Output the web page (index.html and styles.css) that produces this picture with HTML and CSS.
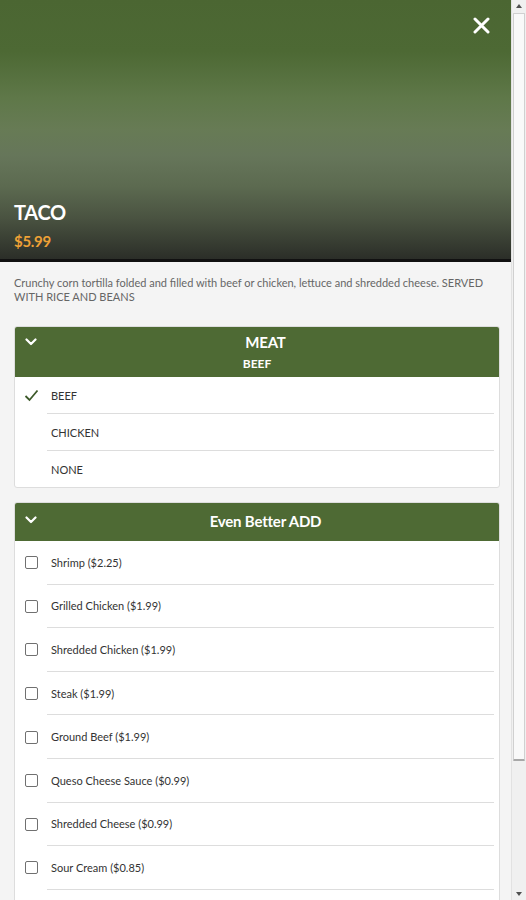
FILE: index.html
```html
<!DOCTYPE html>
<html>
<head>
<meta charset="utf-8">
<link rel="stylesheet" href="styles.css">
</head>
<body>
<div class="page">
  <header class="hero">
    <button class="close" aria-label="Close">
      <svg width="17" height="17" viewBox="0 0 17 17"><path d="M2 2L15 15M15 2L2 15" stroke="#fff" stroke-width="3" stroke-linecap="round"/></svg>
    </button>
    <div class="hero-text">
      <h1 class="title">TACO</h1>
      <div class="price">$5.99</div>
    </div>
  </header>
  <main class="content">
    <p class="desc">Crunchy corn tortilla folded and filled with beef or chicken, lettuce and shredded cheese. SERVED WITH RICE AND BEANS</p>

    <section class="card">
      <div class="card-head tall">
        <svg class="chev" width="12" height="8" viewBox="0 0 12 8"><path d="M1.5 1.5L6 6L10.5 1.5" stroke="#fff" stroke-width="2.2" fill="none" stroke-linecap="round" stroke-linejoin="round"/></svg>
        <div class="head-title">MEAT</div>
        <div class="head-sub">BEEF</div>
      </div>
      <ul class="opts radio">
        <li class="opt"><span class="mark"><svg width="15" height="13" viewBox="0 0 15 13"><path d="M1.5 7L5.5 11L13.5 1.5" stroke="#3d5a2a" stroke-width="1.8" fill="none"/></svg></span><span class="label">BEEF</span></li>
        <li class="opt"><span class="mark"></span><span class="label">CHICKEN</span></li>
        <li class="opt last"><span class="mark"></span><span class="label">NONE</span></li>
      </ul>
    </section>

    <section class="card">
      <div class="card-head">
        <svg class="chev" width="12" height="8" viewBox="0 0 12 8"><path d="M1.5 1.5L6 6L10.5 1.5" stroke="#fff" stroke-width="2.2" fill="none" stroke-linecap="round" stroke-linejoin="round"/></svg>
        <div class="head-title">Even Better ADD</div>
      </div>
      <ul class="opts check">
        <li class="opt"><span class="mark"><span class="box"></span></span><span class="label">Shrimp ($2.25)</span></li>
        <li class="opt"><span class="mark"><span class="box"></span></span><span class="label">Grilled Chicken ($1.99)</span></li>
        <li class="opt"><span class="mark"><span class="box"></span></span><span class="label">Shredded Chicken ($1.99)</span></li>
        <li class="opt"><span class="mark"><span class="box"></span></span><span class="label">Steak ($1.99)</span></li>
        <li class="opt"><span class="mark"><span class="box"></span></span><span class="label">Ground Beef ($1.99)</span></li>
        <li class="opt"><span class="mark"><span class="box"></span></span><span class="label">Queso Cheese Sauce ($0.99)</span></li>
        <li class="opt"><span class="mark"><span class="box"></span></span><span class="label">Shredded Cheese ($0.99)</span></li>
        <li class="opt"><span class="mark"><span class="box"></span></span><span class="label">Sour Cream ($0.85)</span></li>
      </ul>
    </section>
  </main>
</div>
<div class="scrollbar" aria-hidden="true">
  <div class="sb-btn"><span class="arrow up"></span></div>
  <div class="sb-track"><div class="sb-thumb"></div></div>
  <div class="sb-btn"><span class="arrow down"></span></div>
</div>
</body>
</html>
```
FILE: styles.css
```css
* { box-sizing: border-box; }
html, body { margin: 0; padding: 0; }
body {
  display: flex;
  height: 900px;
  overflow: hidden;
  background: #f4f4f4;
  font-family: Lato, "Liberation Sans", sans-serif;
  color: #333;
}
.page {
  width: 511px;
  flex: none;
  height: 900px;
  overflow: hidden;
}
.hero {
  position: relative;
  height: 262px;
  border-bottom: 3px solid #111;
  background: linear-gradient(180deg, #4b6632 0%, #4d6934 20%, #5f7849 38%, #677b55 50%, #66765a 60%, #5c6a50 72%, #4a5341 84%, #2b2e28 100%);
  display: flex;
  align-items: flex-end;
}
.close {
  position: absolute;
  top: 17px;
  right: 21px;
  background: none;
  border: 0;
  padding: 0;
  width: 17px;
  height: 17px;
  cursor: pointer;
}
.close svg { display: block; }
.hero-text { padding: 0 14px 9px; }
.title {
  margin: 0;
  font-size: 20px;
  line-height: 24px;
  font-weight: 700;
  color: #fff;
  letter-spacing: -0.3px;
}
.price {
  margin-top: 8px;
  font-size: 15px;
  line-height: 18px;
  font-weight: 700;
  color: #eea136;
  letter-spacing: -0.3px;
}
.content { padding: 0 11px 40px 14px; }
.desc {
  margin: 14px 0 22px;
  font-size: 11px;
  line-height: 14px;
  color: #666;
}
.card {
  background: #fff;
  border: 1px solid #ddd;
  border-radius: 3px;
  margin-bottom: 14px;
  overflow: hidden;
}
.card-head {
  position: relative;
  background: #4e6a34;
  color: #fff;
  text-align: center;
  margin: -1px -1px 0;
  padding: 10px 0 11px;
  border-radius: 3px 3px 0 0;
}
.card-head.tall { padding: 7px 0 6px; }
.chev {
  position: absolute;
  left: 11px;
  top: 14px;
}
.tall .chev { top: 12px; }
.head-title {
  padding-left: 17px;
  font-size: 15px;
  line-height: 18px;
  font-weight: 700;
  letter-spacing: -0.2px;
}
.head-sub {
  margin-top: 5px;
  font-size: 12px;
  line-height: 15px;
  font-weight: 700;
}
.opts {
  list-style: none;
  margin: 0;
  padding: 0;
}
.opts.check { padding-bottom: 30px; }
.opt {
  display: flex;
  align-items: stretch;
}
.mark {
  width: 32px;
  flex: none;
  display: flex;
  align-items: center;
  justify-content: center;
}
.label {
  flex: 1;
  display: flex;
  align-items: center;
  margin-right: 5px;
  padding-left: 4px;
  font-size: 11px;
  color: #333;
  border-bottom: 1px solid #ddd;
}
.radio .label { height: 37px; padding-top: 1px; }
.check .label { height: 43.6px; }
.opt.last .label { border-bottom: 0; }
.radio .opt.last .label { height: 36px; }
.box {
  width: 13px;
  height: 13px;
  border: 1.5px solid #707070;
  border-radius: 2px;
  background: #fff;
}

/* fake window scrollbar */
.scrollbar {
  width: 15px;
  flex: none;
  height: 900px;
  display: flex;
  flex-direction: column;
  background: #f0f0f0;
  border-left: 1px solid #e2e2e2;
}
.sb-btn {
  height: 12px;
  flex: none;
  display: flex;
  align-items: center;
  justify-content: center;
}
.arrow {
  width: 0;
  height: 0;
  border-left: 3px solid transparent;
  border-right: 3px solid transparent;
}
.arrow.up { border-bottom: 4px solid #505050; }
.arrow.down { border-top: 4px solid #505050; }
.sb-track {
  flex: 1;
  padding: 1px 1px 0 1px;
}
.sb-thumb {
  height: 748px;
  background: #f9f9f9;
  border: 1px solid #d0d0d0;
  border-bottom: 2px solid #a8a8a8;
  border-radius: 1px;
}
```
